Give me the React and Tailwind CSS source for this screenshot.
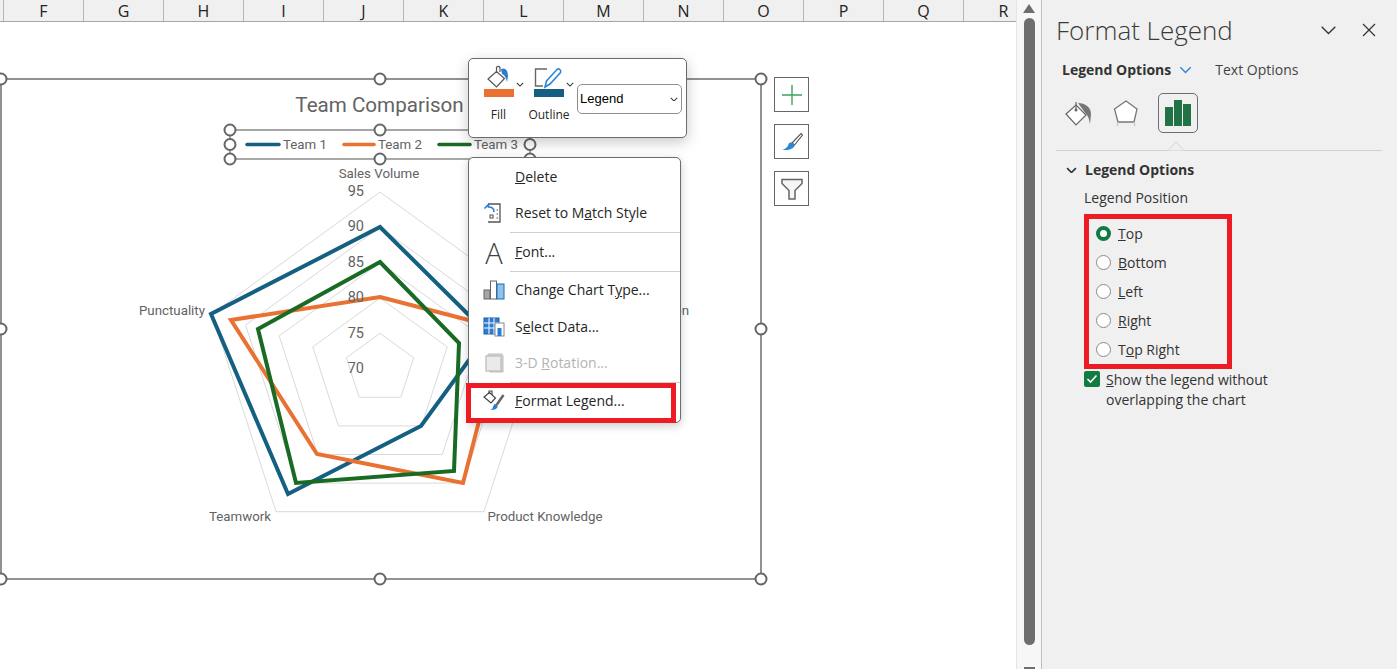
import React from "react";

const columns = ["F","G","H","I","J","K","L","M","N","O","P","Q","R"];

function pts(a){return a.map(p=>p.join(",")).join(" ");}
const cx=380, cy=368.7;
function pentagon(r){
  return pts([0,1,2,3,4].map(i=>{const t=i*72*Math.PI/180;return [+(cx+r*Math.sin(t)).toFixed(1),+(cy-r*Math.cos(t)).toFixed(1)];}));
}
const team1=[[380,227],[488,334],[421,426],[288,494],[211,314]];
const team2=[[380,297],[503,329],[463,483],[317,454],[231,320]];
const team3=[[380,262],[459,343],[454,471],[296,483],[258,329]];
const chartFont={fontFamily:"Roboto, sans-serif"};

function Handle({x,y}){return <circle cx={x} cy={y} r="5.5" fill="#fff" stroke="#666" strokeWidth="2"/>;}

function Chart(){
  const handles=[[1,79],[380,79],[761,79],[1,329],[761,329],[1,579],[380,579],[761,579]];
  const legendHandles=[[230,130],[380,130],[530,130],[230,144.5],[530,144.5],[230,159],[380,159],[530,159]];
  const t="#636363";
  return (
    <svg className="absolute left-0 top-0" width="1016" height="647" viewBox="0 22 1016 647" style={chartFont}>
      <rect x="1" y="79" width="760" height="500" fill="#fff" stroke="#6e6e6e" strokeWidth="1.5"/>
      {[35.4,70.7,106,141.4,176.7].map(r=><polygon key={r} points={pentagon(r)} fill="none" stroke="#d9d9d9" strokeWidth="1"/>)}
      <polygon points={pts(team1)} fill="none" stroke="#156082" strokeWidth="4"/>
      <polygon points={pts(team2)} fill="none" stroke="#e97132" strokeWidth="4"/>
      <polygon points={pts(team3)} fill="none" stroke="#196b24" strokeWidth="4"/>
      <text x="379.500" y="112" textAnchor="middle" fontSize="20.600" fill={t}>Team Comparison</text>
      <rect x="230" y="130" width="300" height="29" fill="none" stroke="#6e6e6e" strokeWidth="1.2"/>
      {[[247,279,"#156082","Team 1",283],[344,374,"#e97132","Team 2",378],[439,470,"#196b24","Team 3",474]].map(([a,b,c,s,x])=>(
        <g key={s}>
          <line x1={a} x2={b} y1="144.500" y2="144.500" stroke={c} strokeWidth="3.500" strokeLinecap="round"/>
          <text x={x} y="149" fontSize="13.300" fill={t}>{s}</text>
        </g>
      ))}
      <text x="379" y="178" textAnchor="middle" fontSize="13.300" fill={t}>Sales Volume</text>
      <text x="205" y="315" textAnchor="end" fontSize="13.300" fill={t}>Punctuality</text>
      <text x="689" y="315" textAnchor="end" fontSize="13.300" fill={t}>Communication</text>
      <text x="240" y="521" textAnchor="middle" fontSize="13.300" fill={t}>Teamwork</text>
      <text x="545" y="521" textAnchor="middle" fontSize="13.300" fill={t}>Product Knowledge</text>
      {[[95,196],[90,231],[85,267],[80,302],[75,338],[70,373]].map(([v,y])=>(
        <text key={v} x="364" y={y} textAnchor="end" fontSize="14.500" fill={t}>{v}</text>
      ))}
      {handles.map(([x,y])=><Handle key={x+"-"+y} x={x} y={y}/>)}
      {legendHandles.map(([x,y])=><Handle key={x+"_"+y} x={x} y={y}/>)}
    </svg>
  );
}

function Chevron({className="",color="#333",w=10,sw=1.3}){
  return <svg className={className} width={w} height={w*0.6} viewBox="0 0 10 6"><path d="M1 1l4 4 4-4" fill="none" stroke={color} strokeWidth={sw}/></svg>;
}

function MiniToolbar(){
  return (
    <div className="absolute left-[468px] top-[36px] w-[219px] h-[80px] bg-white border border-[#6b6b6b] rounded-[5px] shadow-[0_4px_14px_rgba(0,0,0,0.22)] flex pl-[14px] pt-[5px]">
      <div className="w-[31px] flex flex-col items-center">
        <svg width="30" height="25" viewBox="0 0 30 25">
          <path d="M4 15L12.500 7.500 20.500 14.500 12.500 23Z" fill="#fff" stroke="#555" strokeWidth="1.200"/>
          <path d="M12.500 9V3.500a2 2 0 0 1 3.500 0V8" fill="none" stroke="#555" strokeWidth="1.200"/>
          <path d="M17 5c4-2 7 1 7 7l-1 6c-1-4-2-7-5-8z" fill="#2b7cd3"/>
        </svg>
        <div className="w-[30px] h-[8px] bg-[#e97132]"/>
        <span className="mt-[10px] text-[12px] leading-[16px] text-[#262626]">Fill</span>
      </div>
      <Chevron className="mt-[18px] ml-[2px]" w={8}/>
      <div className="ml-[9px] w-[42px] -mr-[8px] flex flex-col items-center -translate-x-[5px]">
        <svg width="30" height="25" viewBox="0 0 30 25">
          <path d="M13 5H1.500V22H9" fill="none" stroke="#666" strokeWidth="1.400"/>
          <path d="M11 23l1.500-6L23 5.500c2-1.500 4.500.5 3.500 3L16 20z" fill="#fff" stroke="#2b88d8" strokeWidth="1.600"/>
        </svg>
        <div className="w-[30px] h-[8px] bg-[#156082]"/>
        <span className="mt-[10px] text-[12px] leading-[16px] text-[#262626]">Outline</span>
      </div>
      <Chevron className="mt-[18px] ml-[-1px]" w={8}/>
      <div className="ml-[3px] mt-[20px] w-[105px] h-[30px] border border-[#8f8f8f] rounded-[5px] flex items-center justify-between pl-[2px] pr-[3px] text-[13px] text-black" style={{fontFamily:'"Liberation Sans", sans-serif'}}>
        <span>Legend</span>
        <Chevron w={8}/>
      </div>
    </div>
  );
}

function ResetIcon(){return (
  <svg width="22" height="22" viewBox="0 0 22 22">
    <path d="M5 2h12v18H5" fill="#fff" stroke="#555" strokeWidth="1.300"/>
    <path d="M1.500 6.500l4-4v2.500c4 0 5.500 1.500 5.500 5" fill="none" stroke="#2b7cd3" strokeWidth="1.600"/>
    <path d="M7 13h3v3H7zM13.500 8h1.500M13.500 12h1.500M13.500 16h1.500" fill="none" stroke="#555" strokeWidth="1.100"/>
  </svg>);}
function FontIcon(){return <span className="text-[29px] leading-none font-light text-[#404040]">A</span>;}
function TypeIcon(){return (
  <svg width="22" height="20" viewBox="0 0 22 20">
    <rect x="1" y="10" width="6" height="9" fill="#a6a6a6" stroke="#666"/>
    <rect x="7.500" y="1" width="6" height="18" fill="#fff" stroke="#666"/>
    <rect x="14" y="4" width="7" height="15" fill="#90c2ee" stroke="#1f6fb5"/>
  </svg>);}
function DataIcon(){return (
  <svg width="22" height="20" viewBox="0 0 22 20">
    <rect x="1" y="1" width="15" height="16" fill="#2b7cd3" stroke="#1f5f9e"/>
    <path d="M1 6h15M1 11h15M6 1v16M11 1v16" stroke="#fff" strokeWidth="1"/>
    <rect x="12" y="6" width="9" height="13" fill="#fff" stroke="#888"/>
    <rect x="14.500" y="11" width="4" height="8" fill="#2b7cd3"/>
  </svg>);}
function RotateIcon(){return (
  <svg width="20" height="20" viewBox="0 0 20 20">
    <path d="M4 1h14l1 2v16H6L4 17z" fill="#d6d6d6" stroke="#bdbdbd"/>
    <rect x="2" y="3" width="15" height="15" fill="#eaeaea" stroke="#bdbdbd" strokeWidth="1.300"/>
  </svg>);}
function LegendIcon(){return (
  <svg width="22" height="22" viewBox="0 0 22 22">
    <path d="M1 7l5.500-4.500 6 5.500-4.500 5z" fill="#fff" stroke="#444" strokeWidth="1.200"/>
    <path d="M6 4V1h3v4" fill="none" stroke="#444" strokeWidth="1.100"/>
    <path d="M20.500 5l-7 10" stroke="#666" strokeWidth="2.500"/>
    <path d="M11.500 14c2 0 3.500 1.500 3 3-.5 2-4 3.500-7.500 3 2-.5 3-2 3-3.500z" fill="#2b7cd3"/>
  </svg>);}

function MenuRow({icon,children,disabled}){
  return (
    <div className={"flex items-center h-[36px] "+(disabled?"text-[#b3b3b3]":"text-[#262626]")}>
      <div className="w-[46px] flex justify-center shrink-0 pl-[4px]">{icon}</div>
      <span className="text-[14px] leading-none">{children}</span>
    </div>
  );
}
const Sep=()=><div className="ml-[41px] h-px bg-[#cfcfcf]"/>;
const Gap=()=><div className="h-px"/>;

function ContextMenu(){
  return (
    <div className="absolute left-[468px] top-[135px] w-[213px] h-[266px] bg-white border border-[#6b6b6b] rounded-[5px] shadow-[0_3px_10px_rgba(0,0,0,0.2)] pt-px">
      <MenuRow><u>D</u>elete</MenuRow>
      <MenuRow icon={<ResetIcon/>}>Reset to M<u>a</u>tch Style</MenuRow>
      <Gap/>
      <Sep/>
      <Gap/>
      <MenuRow icon={<FontIcon/>}><u>F</u>ont...</MenuRow>
      <Gap/>
      <Sep/>
      <MenuRow icon={<TypeIcon/>}>Change Chart T<u>y</u>pe...</MenuRow>
      <Gap/>
      <MenuRow icon={<DataIcon/>}>S<u>e</u>lect Data...</MenuRow>
      <MenuRow disabled icon={<RotateIcon/>}>3-D <u>R</u>otation...</MenuRow>
      <Gap/>
      <Sep/>
      <MenuRow icon={<LegendIcon/>}><u>F</u>ormat Legend...</MenuRow>
    </div>
  );
}

function SideButtons(){
  const b="w-[35px] h-[35px] bg-white border-[1.5px] border-[#666] flex items-center justify-center";
  return (
    <div className="absolute left-[774px] top-[55px] flex flex-col gap-[12px]">
      <div className={b}><svg width="22" height="22" viewBox="0 0 22 22"><path d="M11 1v20M1 11h20" stroke="#3fa35b" strokeWidth="1.400"/></svg></div>
      <div className={b}>
        <svg width="24" height="22" viewBox="0 0 24 22">
          <path d="M12 12L21 2.500l1.500 1.500L14.500 14z" fill="#fff" stroke="#555" strokeWidth="1.100"/>
          <path d="M10.500 11.500c2.500 0 4.500 2 4 3.500-1 3-7 5-12 3.500 3-.5 4.500-2 5.500-4 .5-1.500 1-3 2.500-3z" fill="#2b88d8"/>
        </svg>
      </div>
      <div className={b}>
        <svg width="24" height="24" viewBox="0 0 24 24"><path d="M2 2.500h20v4l-7 7v8.500H9v-8.500l-7-7z" fill="#f6f6f6" stroke="#666" strokeWidth="1.500"/></svg>
      </div>
    </div>
  );
}

function Radio({checked,children}){
  return (
    <div className="flex items-center h-[29px]">
      {checked
        ? <span className="w-[15px] h-[15px] rounded-full border-[4px] border-[#107c41] bg-white shrink-0"/>
        : <span className="w-[15px] h-[15px] rounded-full border border-[#8a8a8a] bg-white shrink-0"/>}
      <span className="ml-[7px] text-[14px] leading-none text-[#333]">{children}</span>
    </div>
  );
}

function Panel(){
  return (
    <aside className="w-[355px] shrink-0 bg-[#f0f0f0] flex flex-col text-[#333] relative">
      <header className="h-[60px] flex items-center pl-[14px] pr-[21px]">
        <h1 className="text-[26px] leading-none font-light text-[#3a3a3a] flex-1 font-['Open_Sans',sans-serif] pb-[1px]">Format Legend</h1>
        <Chevron w={17} sw={0.8} color="#333" className="mr-[25px]"/>
        <svg width="14" height="14" viewBox="0 0 14 14"><path d="M1 1l12 12M13 1L1 13" stroke="#333" strokeWidth="1.200"/></svg>
      </header>
      <div className="flex items-center h-[20px] pl-[20px]">
        <span className="text-[14px] font-bold text-[#333] leading-none">Legend Options</span>
        <Chevron color="#2b88d8" w={13} sw={1.100} className="ml-[8px]"/>
        <span className="ml-[23px] text-[14px] text-[#444] leading-none">Text Options</span>
      </div>
      <div className="flex items-center h-[40px] mt-[13px] pl-[22px]">
        <svg width="30" height="28" viewBox="0 0 30 28">
          <path d="M2 15L12 6l10 10-10 10z" fill="#fff" stroke="#666" strokeWidth="1.200"/>
          <path d="M12 11V3" stroke="#666" strokeWidth="1.200"/><circle cx="12" cy="11" r="1.500" fill="#666"/>
          <path d="M14 4c7 0 13 4 13 11l-1 10c-1-6-2-8-4-10z" fill="#767676"/>
        </svg>
        <svg className="ml-[19px]" width="26" height="28" viewBox="0 0 26 28">
          <path d="M13 2l11 8-3 13H5L1.500 10z" fill="#fff" stroke="#777" strokeWidth="1.300"/>
          <path d="M3 25.500h20" stroke="#f0f0f0" strokeWidth="3"/>
          <path d="M4 27l1.500-4M22 27l-1.500-4" stroke="#bbb" strokeWidth="1"/>
        </svg>
        <div className="ml-[19px] w-[40px] h-[40px] border border-[#6e6e6e] rounded-[5px] flex items-end justify-center pb-[6px] gap-px">
          <div className="w-[8px] h-[19px] bg-[#217346]"/>
          <div className="w-[8px] h-[26px] bg-[#217346]"/>
          <div className="w-[8px] h-[22px] bg-[#217346]"/>
        </div>
      </div>
      <div className="relative mt-[17px] ml-[14px] mr-[15px] h-px bg-[#d0d0d0]">
        <svg className="absolute left-[111px] top-[-9px]" width="18" height="10" viewBox="0 0 18 10"><path d="M0 9.500h1L9 1l8 8.500h1" fill="#f0f0f0" stroke="#d0d0d0"/></svg>
      </div>
      <div className="flex items-center h-[20px] mt-[9px] pl-[24px]">
        <Chevron w={11} sw={1.500} color="#333"/>
        <span className="ml-[8px] text-[14px] font-bold leading-none text-[#333]">Legend Options</span>
      </div>
      <div className="mt-[8px] ml-[42px] text-[14px] leading-[20px] text-[#333]">Legend Position</div>
      <div className="mt-[11px] ml-[54px]">
        <Radio checked><u>T</u>op</Radio>
        <Radio><u>B</u>ottom</Radio>
        <Radio><u>L</u>eft</Radio>
        <Radio><u>R</u>ight</Radio>
        <Radio>T<u>o</u>p Right</Radio>
      </div>
      <div className="mt-[7px] ml-[42px] flex items-start">
        <span className="w-[16px] h-[16px] rounded-[2px] bg-[#107c41] flex items-center justify-center shrink-0">
          <svg width="12" height="10" viewBox="0 0 12 10"><path d="M1.500 5l3 3 6-6.500" fill="none" stroke="#fff" strokeWidth="1.600"/></svg>
        </span>
        <span className="ml-[6px] text-[14px] leading-[20px] text-[#333] -mt-[1px]"><u>S</u>how the legend without<br/>overlapping the chart</span>
      </div>
      <div className="absolute left-[42px] top-[214px] w-[148px] h-[155px] border-[5px] border-[#ed1c24]"/>
    </aside>
  );
}

function Scrollbar(){
  return (
    <div className="w-[26px] shrink-0 bg-[#f7f7f7] border-l border-[#e4e4e4] border-r border-r-[#bdbdbd] flex flex-col items-center relative">
      <svg className="mt-[4px]" width="12" height="9" viewBox="0 0 12 9"><path d="M6 0l6 9H0z" fill="#6e6e6e"/></svg>
      <div className="mt-[5px] w-[11px] h-[627px] rounded-full bg-[#6e6e6e]"/>
      <div className="mt-[22px] w-[11px] h-[2px] bg-[#6e6e6e]"/>
    </div>
  );
}

export default function App(){
  return (
    <div className="w-[1397px] h-[669px] overflow-hidden flex bg-white" style={{fontFamily:'"Open Sans", sans-serif'}}>
      <main className="w-[1016px] shrink-0 flex flex-col">
        <div className="h-[22px] flex bg-[#f0f0f0] border-b border-[#a6a6a6] overflow-hidden shrink-0">
          <div className="w-[4px] shrink-0 border-r border-[#b5b5b5]"/>
          {columns.map(c=>(
            <div key={c} className="w-[80px] shrink-0 border-r border-[#b5b5b5] flex items-center justify-center text-[16px] leading-none text-[#222]">{c}</div>
          ))}
        </div>
        <div className="relative flex-1">
          <Chart/>
          <SideButtons/>
          <MiniToolbar/>
          <ContextMenu/>
          <div className="absolute left-[466px] top-[361px] w-[210px] h-[40px] border-[5px] border-[#ed1c24]"/>
        </div>
      </main>
      <Scrollbar/>
      <Panel/>
    </div>
  );
}
